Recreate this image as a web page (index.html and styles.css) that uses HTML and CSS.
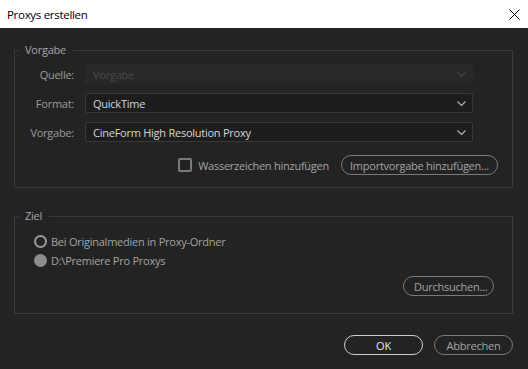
FILE: index.html
```html
<!DOCTYPE html>
<html lang="de">
  <head>
    <meta charset="UTF-8" />
    <title>Proxys erstellen</title>
    <link rel="stylesheet" href="styles.css">
  </head>
  <body>
    <div class="titlebar">
      <span class="title">Proxys erstellen</span>
      <svg class="close" width="11" height="11" viewBox="0 0 11 11">
        <path d="M0.5 0.5 L10.5 10.5 M10.5 0.5 L0.5 10.5" stroke="#000" stroke-width="1" fill="none" />
      </svg>
    </div>

    <div class="dialog">
      <fieldset class="group preset">
        <legend>Vorgabe</legend>
        <div class="form-grid">
          <label>Quelle:</label>
          <div class="select disabled">
            <span>Vorgabe</span>
            <svg class="chevron" width="9" height="5" viewBox="0 0 9 5"><path d="M0.5 0.5 L4.5 4.5 L8.5 0.5" /></svg>
          </div>

          <label>Format:</label>
          <div class="select">
            <span>QuickTime</span>
            <svg class="chevron" width="9" height="5" viewBox="0 0 9 5"><path d="M0.5 0.5 L4.5 4.5 L8.5 0.5" /></svg>
          </div>

          <label>Vorgabe:</label>
          <div class="select">
            <span>CineForm High Resolution Proxy</span>
            <svg class="chevron" width="9" height="5" viewBox="0 0 9 5"><path d="M0.5 0.5 L4.5 4.5 L8.5 0.5" /></svg>
          </div>
        </div>

        <div class="options">
          <label class="checkbox"><span class="box"></span>Wasserzeichen hinzufügen</label>
          <button class="pill import">Importvorgabe hinzufügen...</button>
        </div>
      </fieldset>

      <fieldset class="group target">
        <legend>Ziel</legend>
        <div class="radios">
          <label class="radio"><span class="dot"></span>Bei Originalmedien in Proxy-Ordner</label>
          <label class="radio checked"><span class="dot"></span>D:\Premiere Pro Proxys</label>
        </div>
        <div class="browse">
          <button class="pill">Durchsuchen...</button>
        </div>
      </fieldset>

      <div class="actions">
        <button class="pill primary">OK</button>
        <button class="pill">Abbrechen</button>
      </div>
    </div>
  </body>
</html>
```

FILE: styles.css
```css
html,
body {
  margin: 0;
  height: 100%;
}

body {
  font-family: "Open Sans", "Noto Sans", sans-serif;
  font-size: 11px;
  letter-spacing: -0.25px;
  background-color: #232323;
  color: #a3a3a3;
  display: flex;
  flex-direction: column;
}

.titlebar {
  height: 28px;
  background-color: #ffffff;
  display: flex;
  align-items: center;
  justify-content: space-between;
  padding: 0 8px 0 7px;
}

.title {
  color: #000;
  font-size: 11.5px;
  letter-spacing: -0.3px;
}

.dialog {
  flex: 1;
  display: flex;
  flex-direction: column;
  padding: 14px 15px 0 14px;
}

.group {
  margin: 0;
  border: 1px solid #3a3a3a;
  padding: 0;
  min-width: 0;
}

.group legend {
  margin-left: 3px;
  padding: 0 7px;
  color: #a3a3a3;
  line-height: 16px;
}

.preset {
  height: 146px;
  box-sizing: border-box;
  padding-top: 6px;
}

.form-grid {
  display: grid;
  grid-template-columns: 59px 388px;
  column-gap: 11px;
  row-gap: 9px;
  align-items: center;
}

.form-grid label {
  text-align: right;
  color: #9c9c9c;
}

.select {
  height: 20px;
  box-sizing: border-box;
  border: 1px solid #383838;
  border-radius: 2px;
  background-color: #1d1d1d;
  color: #d6d6d6;
  display: flex;
  align-items: center;
  justify-content: space-between;
  padding: 0 6px 0 7px;
}

.select .chevron path {
  fill: none;
  stroke: #b4b4b4;
  stroke-width: 1.1;
}

.select.disabled {
  background-color: #282828;
  border-color: #282828;
  color: #4a4a4a;
}

.select.disabled .chevron path {
  stroke: #444;
}

.options {
  display: flex;
  justify-content: flex-end;
  align-items: center;
  gap: 12px;
  margin-top: 13px;
  padding-right: 14px;
}

.checkbox {
  display: flex;
  align-items: center;
  gap: 6px;
}

.box {
  width: 14px;
  height: 14px;
  box-sizing: border-box;
  border: 2px solid #7a7a7a;
  border-radius: 2px;
}

.pill {
  height: 20px;
  box-sizing: border-box;
  background: transparent;
  border: 1px solid #7a7a7a;
  border-radius: 10px;
  color: #a3a3a3;
  font-family: inherit;
  font-size: 11px;
  letter-spacing: inherit;
  padding: 0 10px;
  cursor: pointer;
}

.pill.import {
  width: 157px;
  padding: 0;
}

.pill.primary {
  border-color: #cfcfcf;
  color: #e6e6e6;
}

.target {
  margin-top: 20px;
  height: 106px;
  box-sizing: border-box;
  padding-top: 9px;
}

.radios {
  display: flex;
  flex-direction: column;
  gap: 3px;
  padding-left: 19px;
}

.radio {
  display: flex;
  align-items: center;
  gap: 4px;
  height: 16px;
}

.dot {
  width: 13px;
  height: 13px;
  box-sizing: border-box;
  border: 2px solid #9a9a9a;
  border-radius: 50%;
}

.radio.checked .dot {
  border-color: #8c8c8c;
  background-color: #8c8c8c;
}

.browse {
  display: flex;
  justify-content: flex-end;
  margin-top: 8px;
  padding-right: 18px;
}

.browse .pill {
  width: 91px;
}

.actions {
  display: flex;
  justify-content: flex-end;
  gap: 11px;
  margin-top: 21px;
}

.actions .pill {
  width: 79px;
}
```
